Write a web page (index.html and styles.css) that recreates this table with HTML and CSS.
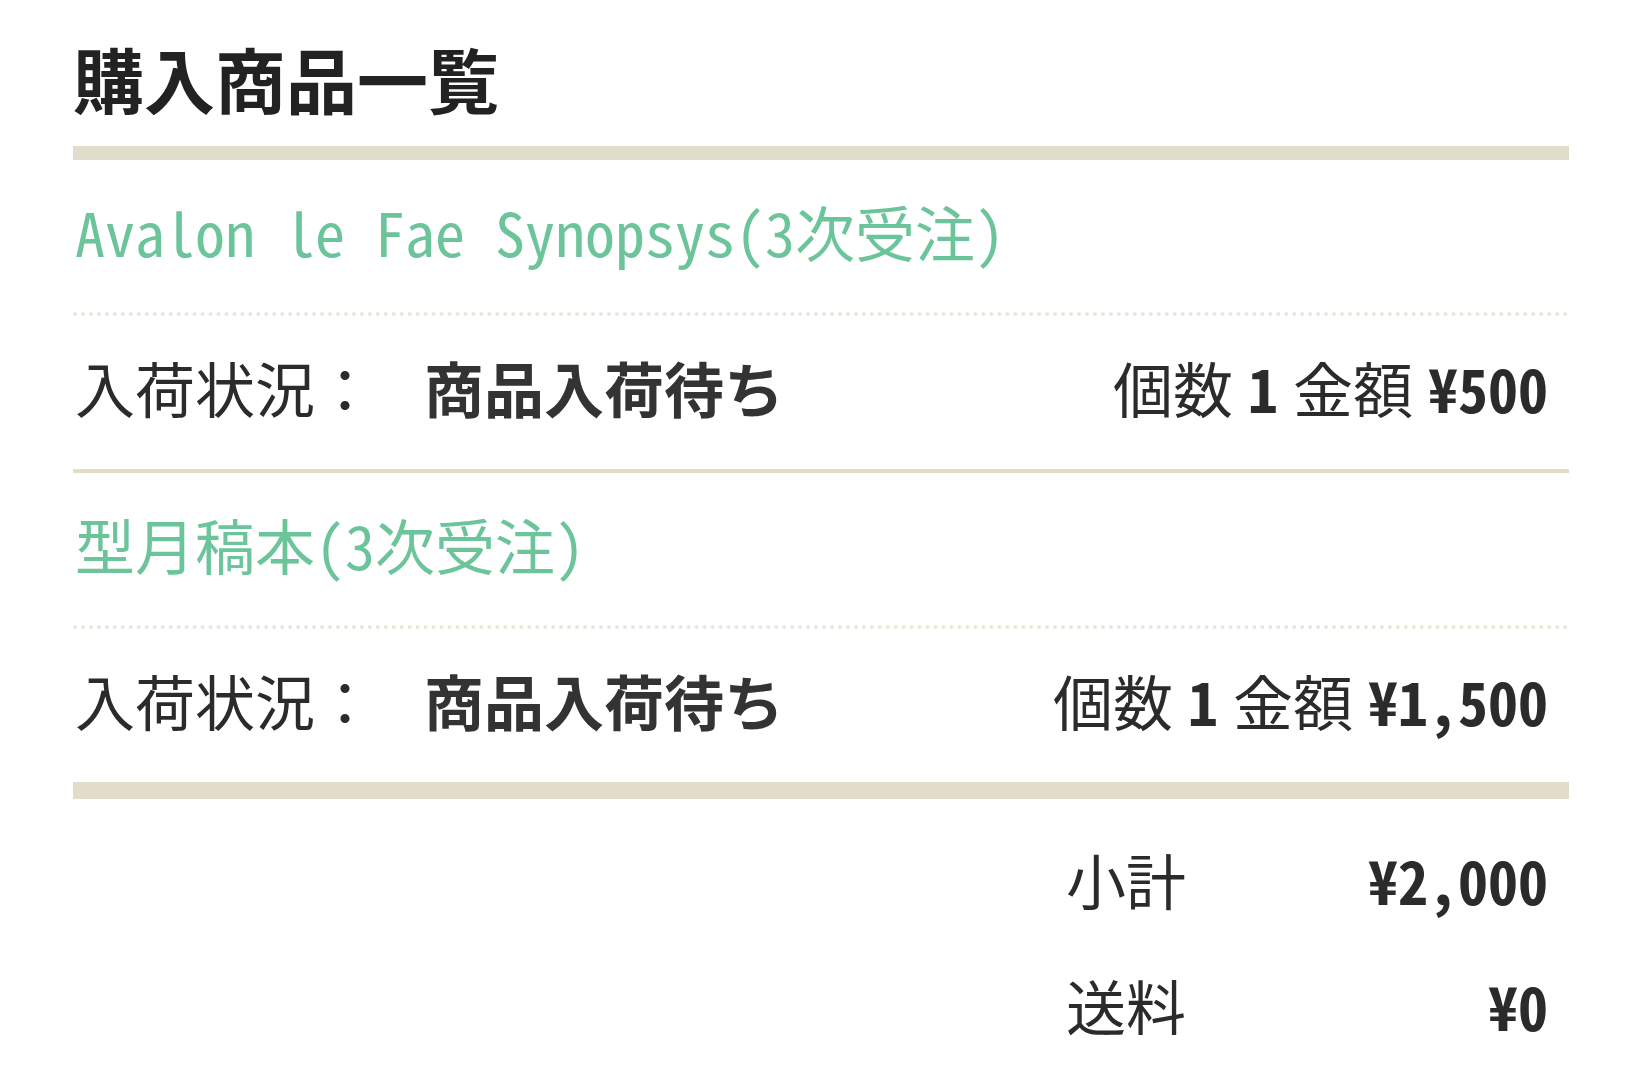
FILE: index.html
```html
<!DOCTYPE html>
<html lang="ja">
<head>
<meta charset="utf-8">
<title>購入商品一覧</title>
<link rel="stylesheet" href="styles.css">
</head>
<body>
<main class="page">
  <h1 class="title">購入商品一覧</h1>
  <section class="list">
    <div class="item">
      <div class="item-name">Avalon le Fae Synopsys(3次受注)</div>
      <div class="item-row">
        <span class="label">入荷状況：</span>
        <span class="status">商品入荷待ち</span>
        <span class="qty"><span class="k">個数</span><b class="num">1</b><span class="k">金額</span><b class="num">¥500</b></span>
      </div>
    </div>
    <div class="item">
      <div class="item-name">型月稿本(3次受注)</div>
      <div class="item-row">
        <span class="label">入荷状況：</span>
        <span class="status">商品入荷待ち</span>
        <span class="qty"><span class="k">個数</span><b class="num">1</b><span class="k">金額</span><b class="num">¥1,500</b></span>
      </div>
    </div>
  </section>
  <section class="totals">
    <div class="total-row"><span class="t-label">小計</span><b class="t-value">¥2,000</b></div>
    <div class="total-row"><span class="t-label">送料</span><b class="t-value">¥0</b></div>
  </section>
</main>
</body>
</html>
```
FILE: styles.css
```css
html, body {
  margin: 0;
  padding: 0;
  background: #ffffff;
}
body {
  font-family: "Noto Sans Mono CJK JP", "Noto Sans CJK JP", sans-serif;
  color: #2b2b2b;
}
.page {
  padding: 41px 74px 0 73px;
}
.title {
  margin: 0;
  font-size: 71px;
  line-height: 72px;
  font-weight: 700;
  color: #222222;
  font-family: "Noto Sans CJK JP", sans-serif;
}
.list {
  margin-top: 33px;
  border-top: 14px solid #e2dccb;
  border-bottom: 17px solid #e2dccb;
}
.item + .item .item-name {
  border-top: 4px solid #e2dccb;
}
.item-name {
  padding: 41px 0 51px 2px;
  font-size: 60px;
  line-height: 60px;
  color: #6cc49a;
  border-bottom: 4px dotted #ebe6d8;
  white-space: nowrap;
}
.item-row {
  display: flex;
  align-items: center;
  padding: 41px 21px 52px 2px;
  font-size: 60px;
  line-height: 60px;
  white-space: nowrap;
}
.label {
  width: 349px;
  flex: none;
}
.status {
  font-weight: 700;
  color: #333333;
  font-family: "Noto Sans CJK JP", sans-serif;
}
.qty {
  margin-left: auto;
  display: flex;
  gap: 15px;
}
.num {
  font-weight: 700;
}
.totals {
  width: 482px;
  margin: 50px 21px 0 auto;
  display: flex;
  flex-direction: column;
  gap: 66px;
}
.total-row {
  display: flex;
  justify-content: space-between;
  font-size: 60px;
  line-height: 60px;
}
.t-value {
  font-weight: 700;
}
```
